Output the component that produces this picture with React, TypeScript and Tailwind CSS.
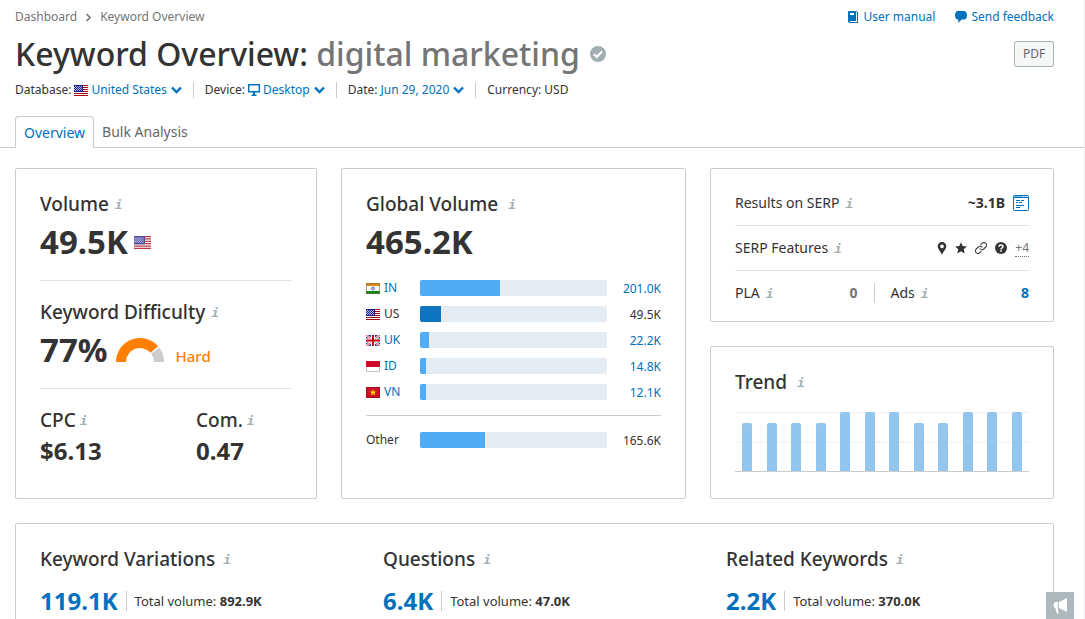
import type { ReactNode } from "react";

// ====================== MOCK DATA ============================
const volumes = [
  { code: "IN", value: "201.0K", share: 43 },
  { code: "US", value: "49.5K", share: 11, current: true },
  { code: "UK", value: "22.2K", share: 5 },
  { code: "ID", value: "14.8K", share: 3 },
  { code: "VN", value: "12.1K", share: 3 },
];

const trend = [82, 82, 82, 82, 100, 100, 100, 82, 82, 100, 100, 100];

const ideas = [
  { title: "Keyword Variations", count: "119.1K", total: "892.9K" },
  { title: "Questions", count: "6.4K", total: "47.0K" },
  { title: "Related Keywords", count: "2.2K", total: "370.0K" },
];

// ====================== ICONS ============================
function Chevron() {
  return (
    <svg width="11" height="8" viewBox="0 0 11 8" fill="none" stroke="#0071bc" strokeWidth="2.4" aria-hidden="true">
      <path d="M1 1.5 5.5 6 10 1.5" />
    </svg>
  );
}

function Flag({ code, className = "h-[11px] w-[14px]" }: { code: string; className?: string }) {
  return (
    <svg viewBox="0 0 14 11" preserveAspectRatio="none" className={`shrink-0 ${className}`} aria-hidden="true">
      {code === "US" && (
        <>
          <path fill="#fff" d="M0 0h14v11H0z" />
          <path stroke="#a80a14" strokeWidth="1" d="M0 .5h14M0 2.5h14M0 4.5h14M0 6.5h14M0 8.5h14M0 10.5h14" />
          <path fill="#1c1c8c" d="M0 0h9v7H0z" />
          <path
            stroke="#b9b9e6"
            strokeWidth="1"
            strokeDasharray="1 1"
            d="M1 1.5h8M0 2.5h8M1 3.5h8M0 4.5h8M1 5.5h8"
          />
        </>
      )}
      {code === "IN" && (
        <>
          <path fill="#fff" d="M0 0h14v11H0z" />
          <path fill="#e08a1e" d="M0 0h14v3H0z" />
          <path fill="#0f8a14" d="M0 8h14v3H0z" />
          <circle cx="7" cy="5.5" r="1.6" fill="#b4bce0" stroke="#4c5aa8" strokeWidth=".7" />
          <path fill="none" stroke="#7a6a3a" strokeOpacity=".6" d="M.5.5h13v10H.5z" />
        </>
      )}
      {code === "UK" && (
        <>
          <path fill="#223a80" d="M0 0h14v11H0z" />
          <path stroke="#fff" strokeWidth="2.2" d="m0 0 14 11M14 0 0 11" />
          <path stroke="#cc1020" strokeWidth=".8" d="m0 0 14 11M14 0 0 11" />
          <path stroke="#fff" strokeWidth="4" d="M7 0v11M0 5.5h14" />
          <path stroke="#cc0010" strokeWidth="2" d="M7 0v11M0 5.5h14" />
        </>
      )}
      {code === "ID" && (
        <>
          <path fill="#fff" d="M0 0h14v11H0z" />
          <path fill="none" stroke="#c4c4c4" d="M.5.5h13v10H.5z" />
          <path fill="#cf0c28" d="M0 0h14v6H0z" />
        </>
      )}
      {code === "VN" && (
        <>
          <path fill="#cf1126" d="M0 0h14v11H0z" />
          <path fill="none" stroke="#a01020" d="M.5.5h13v10H.5z" />
          <path fill="#ffd500" d="m7 2 .9 2.5h2.6L8.4 6l.8 2.6L7 7.1 4.8 8.6 5.6 6 3.5 4.5h2.6z" />
        </>
      )}
    </svg>
  );
}

function Info({ label }: { label: string }) {
  return (
    <button
      type="button"
      aria-label={`About ${label}`}
      className="pt-0.5 font-['DejaVu_Sans_Mono',monospace] text-[13px] leading-4 font-bold text-[#a4afb3] italic"
    >
      i
    </button>
  );
}

// ====================== PARTS ============================
function Card({ className = "", children }: { className?: string; children: ReactNode }) {
  return <section className={`rounded-xs border border-[#ccc] bg-white px-6 ${className}`}>{children}</section>;
}

function CardTitle({ children, gap = "gap-1.5" }: { children: string; gap?: string }) {
  return (
    <div className={`flex h-6 items-center ${gap}`}>
      <h2 className="text-[19px] leading-6 font-medium whitespace-nowrap">{children}</h2>
      <Info label={children} />
    </div>
  );
}

function Bar({ share, current }: { share: number; current?: boolean }) {
  return (
    <div className="h-4 overflow-hidden rounded-xs bg-[#e4ebf1]">
      <div className={`h-full ${current ? "bg-[#0f75c1]" : "bg-[#50adf5]"}`} style={{ width: `${share}%` }} />
    </div>
  );
}

function Header() {
  return (
    <header className="pt-2">
      <div className="pr-[30px] pl-[15px]">
        <div className="flex h-[18px] items-center justify-between text-xs">
          <nav aria-label="Breadcrumb" className="flex items-center gap-2 text-[#757575]">
            <a href="#dashboard">Dashboard</a>
            <svg width="7" height="9" viewBox="0 0 7 9" fill="none" stroke="#757575" strokeWidth="1.6" aria-hidden="true">
              <path d="m1.500 1 3.500 3.500L1.500 8" />
            </svg>
            <a href="#overview">Keyword Overview</a>
          </nav>
          <div className="flex items-center gap-5 text-[#0071bc]">
            <a href="#manual" className="flex items-center gap-1">
              <svg width="11" height="12" viewBox="0 0 11 12" aria-hidden="true">
                <path fill="#0071bc" d="M1 0h8v1h1v11H2a2 2 0 0 1-2-2V1a1 1 0 0 1 1-1z" />
                <path fill="#fff" d="M2 2h4v2H2zM2 10h6V1h1v10H2z" />
              </svg>
              User manual
            </a>
            <a href="#feedback" className="flex items-center gap-1">
              <svg width="12" height="12" viewBox="0 0 12 12" fill="#0071bc" aria-hidden="true">
                <path d="M3 0h6c2 0 3 1.700 3 4.200S11 8.500 9 8.500H6.500L3.300 12V8.500H3c-2 0-3-1.800-3-4.300S1 0 3 0z" />
              </svg>
              Send feedback
            </a>
          </div>
        </div>

        {/* Title */}
        <div className="mt-1.5 flex h-11 items-center justify-between">
          <div className="flex items-center gap-2.5">
            <h1 className="text-[32px] leading-11 font-medium whitespace-nowrap">
              Keyword Overview: <span className="text-[#757575]">digital marketing</span>
            </h1>
            <svg width="16" height="16" viewBox="0 0 16 16" aria-hidden="true">
              <circle cx="8" cy="8" r="8" fill="#a2aeb2" />
              <path fill="none" stroke="#fff" strokeWidth="2.2" d="m4 8.300 2.800 2.700L12 5.500" />
            </svg>
          </div>
          <button type="button" className="h-[26px] w-10 rounded-xs border border-[#a9b4b7] bg-[#f5f7f7] text-xs text-[#666]">
            PDF
          </button>
        </div>

        {/* Report settings */}
        <div className="mt-1 flex h-5 items-center gap-[11px] text-xs">
          <div className="flex items-center gap-[3px]">
            Database:
            <Flag code="US" />
            <button type="button" className="flex items-center gap-1 text-[#0071bc]">
              United States <Chevron />
            </button>
          </div>
          <div className="h-4 w-px bg-[#ccc]" />
          <div className="flex items-center gap-[3px]">
            Device:
            <svg width="12" height="12" viewBox="0 0 12 12" aria-hidden="true">
              <path fill="none" stroke="#0071bc" strokeWidth="1.4" d="M.7.7h10.600v7H.7z" />
              <path fill="#0071bc" d="M5 8h2v2.500h1.500V12h-5v-1.500H5z" />
            </svg>
            <button type="button" className="flex items-center gap-1 text-[#0071bc]">
              Desktop <Chevron />
            </button>
          </div>
          <div className="h-4 w-px bg-[#ccc]" />
          <div className="flex items-center gap-[3px]">
            Date:
            <button type="button" className="flex items-center gap-1 text-[#0071bc]">
              Jun 29, 2020 <Chevron />
            </button>
          </div>
          <div className="h-4 w-px bg-[#ccc]" />
          <div>Currency: USD</div>
        </div>
      </div>

      {/* Tabs */}
      <div role="tablist" className="mt-4 flex border-b border-[#ccc] pl-[15px] text-sm">
        <button
          type="button"
          role="tab"
          aria-selected="true"
          className="-mb-px h-8 rounded-t-sm border border-b-0 border-[#ccc] bg-white px-2 text-[#0071bc]"
        >
          Overview
        </button>
        <button type="button" role="tab" aria-selected="false" className="px-2 text-[#666]">
          Bulk Analysis
        </button>
      </div>
    </header>
  );
}

function VolumeCard() {
  return (
    <Card className="pt-[23px] pb-[31px]">
      <div className="border-b border-[#dfe3e4] pb-[18px]">
        <CardTitle>Volume</CardTitle>
        <div className="mt-1.5 flex h-10 items-center gap-1.5">
          <span className="text-[33px] leading-10 font-bold">49.5K</span>
          <Flag code="US" className="h-[13px] w-[17px] opacity-80" />
        </div>
      </div>

      <div className="border-b border-[#dfe3e4] pt-[19px] pb-[18px]">
        <CardTitle>Keyword Difficulty</CardTitle>
        <div className="mt-1.5 flex h-10 items-center gap-2">
          <span className="text-[33px] leading-10 font-bold">77%</span>
          <svg width="48" height="24" viewBox="0 0 48 24" fill="none" aria-hidden="true">
            <path stroke="#ff8000" strokeWidth="10" d="M5 24A19 19 0 0 1 38.400 11.600" />
            <path stroke="#ccc" strokeWidth="10" d="M39.200 12.500A19 19 0 0 1 43 24" />
          </svg>
          <span className="mt-3 ml-1 text-[15px] leading-5 font-medium text-[#ff8000]">Hard</span>
        </div>
      </div>

      <div className="grid grid-cols-[156fr_96fr] pt-[19px]">
        <div>
          <CardTitle gap="gap-1">CPC</CardTitle>
          <div className="mt-[3px] text-2xl leading-8 font-bold">$6.13</div>
        </div>
        <div>
          <CardTitle gap="gap-1">Com.</CardTitle>
          <div className="mt-[3px] text-2xl leading-8 font-bold">0.47</div>
        </div>
      </div>
    </Card>
  );
}

function GlobalVolumeCard() {
  return (
    <Card className="pt-[23px]">
      <CardTitle gap="gap-2.5">Global Volume</CardTitle>
      <div className="mt-1.5 text-[33px] leading-10 font-bold">465.2K</div>
      <table className="mt-[13px] w-full table-fixed text-xs">
        <colgroup>
          <col className="w-[54px]" />
          <col />
          <col className="w-[54px]" />
        </colgroup>
        <tbody>
          {volumes.map((v) => (
            <tr key={v.code} className={`h-[26px] ${v.current ? "" : "text-[#0071bc]"}`}>
              <th scope="row" className="p-0 text-left font-normal">
                <span className="flex items-center gap-1">
                  <Flag code={v.code} />
                  {v.current ? v.code : <a href={`#${v.code}`}>{v.code}</a>}
                </span>
              </th>
              <td className="p-0">
                <Bar share={v.share} current={v.current} />
              </td>
              <td className="px-0 pt-0.5 pb-0 text-right">
                {v.current ? v.value : <a href={`#${v.code}`}>{v.value}</a>}
              </td>
            </tr>
          ))}
        </tbody>
        <tfoot>
          <tr>
            <td colSpan={3} className="px-0 pt-2.5 pb-[11px]">
              <hr className="border-[#ccc]" />
            </td>
          </tr>
          <tr className="h-[26px]">
            <th scope="row" className="p-0 text-left font-normal">Other</th>
            <td className="p-0">
              <Bar share={35} />
            </td>
            <td className="px-0 pt-0.5 pb-0 text-right">165.6K</td>
          </tr>
        </tfoot>
      </table>
    </Card>
  );
}

function SerpCard() {
  return (
    <Card className="pt-3 pb-1.5 text-sm">
      <div className="flex h-[45px] items-center gap-1.5 border-b border-[#dfe3e4]">
        Results on SERP <Info label="Results on SERP" />
        <span className="ml-auto font-bold">~3.1B</span>
        <a href="#serp" aria-label="View SERP" className="ml-0.5">
          <svg width="16" height="16" viewBox="0 0 16 16" fill="none" stroke="#0071bc" aria-hidden="true">
            <rect x=".5" y=".5" width="15" height="15" rx="1" />
            <path d="M1 2.500h14M3 5.500h4M8 5.500h3M3 7.500h2M6 7.500h3M3 10.500h8M3 12.500h4" />
            <path d="M1 1.500h9M11 1.500h1M13 1.500h1" strokeOpacity=".5" />
          </svg>
        </a>
      </div>

      <div className="flex h-[45px] items-center gap-1.5 border-b border-[#dfe3e4]">
        SERP Features <Info label="SERP Features" />
        <div className="ml-auto flex items-center gap-2">
          <svg width="10" height="13" viewBox="0 0 8 12" fill="#333" aria-hidden="true">
            <path
              fillRule="evenodd"
              d="M4 0a4 4 0 0 1 4 4c0 2.500-3 5-4 8-1-3-4-5.500-4-8a4 4 0 0 1 4-4zm0 2.300a1.700 1.700 0 1 0 0 3.400 1.700 1.700 0 0 0 0-3.400z"
            />
          </svg>
          <svg width="12" height="12" viewBox="0 0 12 12" fill="#333" aria-hidden="true">
            <path d="m6 .2 1.700 3.900 4.200.4-3.200 2.800 1 4.200L6 9.300l-3.700 2.200 1-4.200L.1 4.500l4.200-.4z" />
          </svg>
          <svg width="12" height="12" viewBox="0 0 24 24" fill="none" stroke="#444" strokeWidth="2.2" strokeLinecap="round" aria-hidden="true">
            <path d="M10 13.500a5 5 0 0 0 7.500.5l4-4a5 5 0 0 0-7-7.500l-3 2.700" />
            <path d="M14 10.500a5 5 0 0 0-7.500-.5l-4 4a5 5 0 0 0 7 7.500l3-2.700" />
          </svg>
          <svg width="12" height="12" viewBox="0 0 12 12" aria-hidden="true">
            <circle cx="6" cy="6" r="6" fill="#333" />
            <path fill="none" stroke="#fff" strokeWidth="1.5" d="M4 4.700C4 2.300 8 2.300 8 4.600 8 6 6 5.800 6 7.500" />
            <path fill="#fff" d="M5.200 8.300h1.600v1.500H5.200z" />
          </svg>
          <button type="button" className="border-b border-dotted border-[#757575] text-xs text-[#757575]">
            +4
          </button>
        </div>
      </div>

      <div className="flex h-11 items-center">
        <div className="flex flex-1 items-center gap-1.5">
          PLA <Info label="PLA" />
          <span className="mr-4 ml-auto font-bold text-[#757575]">0</span>
        </div>
        <div className="flex h-5 flex-1 items-center gap-1.5 border-l border-[#ccc] pl-4">
          Ads <Info label="Ads" />
          <a href="#ads" className="ml-auto font-bold text-[#0071bc]">8</a>
        </div>
      </div>
    </Card>
  );
}

function TrendCard() {
  return (
    <Card className="flex-1 pt-[23px]">
      <CardTitle gap="gap-2.5">Trend</CardTitle>
      <div className="relative mt-[18px] flex h-[60px] items-end border-b border-[#ccc]">
        <div className="absolute inset-x-0 top-0 h-px bg-[#f0f0f0]" />
        <div className="absolute inset-x-0 top-[29px] h-0.5 bg-[#f7f7f7]" />
        {trend.map((value, i) => (
          <div key={i} className="relative flex h-full flex-1 items-end justify-center">
            <div className="w-2.5 rounded-t-xs bg-[#92c6ef]" style={{ height: `${value}%` }} />
          </div>
        ))}
      </div>
    </Card>
  );
}

// =============================================================

export default function App() {
  return (
    <div className="min-h-screen border-r border-[#eee] bg-white font-['Noto_Sans',sans-serif] text-[#333]">
      <Header />
      <main className="pt-5 pr-[30px] pb-6 pl-[15px]">
        <div className="grid grid-cols-[302fr_345fr_344fr] gap-6">
          <VolumeCard />
          <GlobalVolumeCard />
          <div className="flex flex-col gap-6">
            <SerpCard />
            <TrendCard />
          </div>
        </div>

        <Card className="mt-6 grid grid-cols-3 gap-10 pt-[23px] pb-6">
          {ideas.map((idea) => (
            <div key={idea.title}>
              <CardTitle gap="gap-2">{idea.title}</CardTitle>
              <div className="mt-3.5 flex h-8 items-center gap-2">
                <a href="#ideas" className="text-2xl leading-8 font-bold text-[#0071bc]">{idea.count}</a>
                <div className="h-5 w-px bg-[#ccc]" />
                <div className="text-[13px] leading-5 whitespace-nowrap">
                  Total volume: <b>{idea.total}</b>
                </div>
              </div>
            </div>
          ))}
        </Card>
      </main>

      <button
        type="button"
        aria-label="Leave feedback"
        className="fixed right-[11px] bottom-0 flex h-[27px] w-7 items-center justify-center bg-[#adb9bd]"
      >
        <svg width="15" height="16" viewBox="0 0 15 16" fill="#fff" aria-hidden="true">
          <path d="M14 0v14L6 10V4zM5 4v6l.5 5.500H3.800L2.500 10.300C-.3 10 0 4 3 4z" />
          <path stroke="#adb9bd" strokeWidth=".8" d="M5.400 3.500v7" />
        </svg>
      </button>
    </div>
  );
}
